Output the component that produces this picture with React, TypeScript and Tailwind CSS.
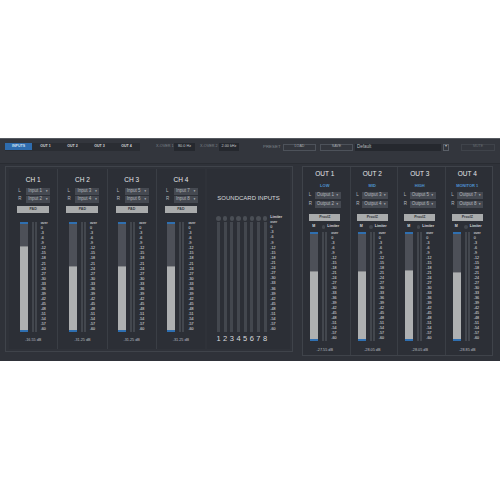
const scale = ['over', '0', '-3', '-6', '-9', '-12', '-15', '-18', '-21', '-24', '-27', '-30', '-33', '-36', '-39', '-42', '-45', '-48', '-51', '-54', '-57', '-60'];

const inputs = [
  { name: 'CH 1', l: 'Input 1', r: 'Input 2', level: 78, db: '-16.55 dB' },
  { name: 'CH 2', l: 'Input 3', r: 'Input 4', level: 60, db: '-31.25 dB' },
  { name: 'CH 3', l: 'Input 5', r: 'Input 6', level: 60, db: '-31.25 dB' },
  { name: 'CH 4', l: 'Input 7', r: 'Input 8', level: 60, db: '-31.25 dB' },
];

const outputs = [
  { name: 'OUT 1', tag: 'LOW', l: 'Output 1', r: 'Output 2', level: 64, db: '-27.55 dB' },
  { name: 'OUT 2', tag: 'MID', l: 'Output 3', r: 'Output 4', level: 64, db: '-28.05 dB' },
  { name: 'OUT 3', tag: 'HIGH', l: 'Output 5', r: 'Output 6', level: 65, db: '-28.05 dB' },
  { name: 'OUT 4', tag: 'MONITOR 1', l: 'Output 7', r: 'Output 8', level: 63, db: '-28.85 dB' },
];

const Scale = () => (
  <div className="flex h-full w-[8px] flex-col justify-between text-[3.6px] leading-none text-[#e8eaec]">
    {scale.map((s) => (
      <span key={s}>{s}</span>
    ))}
  </div>
);

const Meter = ({ level }: { level: number }) => (
  <div className="flex h-full gap-[4px]">
    <div className="relative h-full w-[8px] bg-[#4d5058]">
      <div className="absolute right-0 bottom-0 left-0 border-t border-[#85878a] bg-[#aeb0b1]" style={{ height: `${level}%` }} />
      <div className="absolute top-0 right-0 left-0 h-[2px] bg-[#2f6fb0]" />
      <div className="absolute right-0 bottom-0 left-0 h-[2px] bg-[#2f6fb0]" />
    </div>
    <div className="flex h-full w-[5px] gap-px">
      <div className="h-full flex-1 bg-[#43474e]" />
      <div className="h-full flex-1 bg-[#43474e]" />
    </div>
  </div>
);

const Select = ({ side, label, wide }: { side: string; label: string; wide?: boolean }) => (
  <div className={`flex h-[7px] items-center text-[4.5px] leading-none text-[#b4b8be] ${wide ? 'gap-[3px]' : 'gap-[5px]'}`}>
    <span className="w-[3px]">{side}</span>
    <div className={`flex h-[7px] items-center justify-between bg-[#454951] px-[2px] ${wide ? 'w-[26px]' : 'w-[24px]'}`}>
      <span>{label}</span>
      <span className="text-[3px]">▼</span>
    </div>
  </div>
);

const Tab = ({ label, active }: { label: string; active?: boolean }) => (
  <div className={`flex h-[7px] w-[27px] items-center justify-center text-[3.6px] leading-none font-bold ${active ? 'bg-[#2e6cae] text-[#cfe0f2]' : 'text-[#d5d8dc]'}`}>
    {label}
  </div>
);

const App = () => {
  return (
    <div className="h-[500px] w-[500px] overflow-hidden bg-white font-['Liberation_Sans',sans-serif]">
      <div className="mt-[138px] h-[223px] bg-[#2f3239]">
        {/* top bar */}
        <div className="flex h-[26px] items-start border-t border-b border-t-[#565a60] border-b-[#292c32] bg-[#33363d] pt-[4px] pl-[5px]">
          <div className="flex h-[8px] w-[135px] items-start bg-[#2a2d33]">
            <Tab label="INPUTS" active />
            <Tab label="OUT 1" />
            <Tab label="OUT 2" />
            <Tab label="OUT 3" />
            <Tab label="OUT 4" />
          </div>
          <div className="flex h-[8px] items-center text-[3.8px] whitespace-nowrap text-[#7d828a]">
            <span className="ml-[16px] w-[15px]">X-OVER 1</span>
            <span className="ml-[3px] w-[21px] bg-[#25282e] py-px text-center text-[#c3c7cc]">80.0 Hz</span>
            <span className="ml-[5px] w-[16px]">X-OVER 2</span>
            <span className="ml-[3px] w-[20px] bg-[#25282e] py-px text-center text-[#c3c7cc]">2.00 kHz</span>
            <span className="ml-[24px] w-[16px] text-[4.4px]">PRESET</span>
            <div className="ml-[4px] flex h-[7px] w-[33px] items-center justify-center border border-[#4d525a] text-[3.6px] text-[#a5a9ae]">LOAD</div>
            <div className="ml-[4px] flex h-[7px] w-[33px] items-center justify-center border border-[#4d525a] text-[3.6px] text-[#a5a9ae]">SAVE</div>
            <div className="ml-[2px] flex h-[7px] w-[86px] items-center bg-[#25282e] px-[2px] text-[4.5px] text-[#b5b9be]">Default</div>
            <div className="ml-[2px] flex h-[7px] w-[6px] items-center justify-center border border-[#5a5f67] text-[3.6px] text-[#b5b9be]">▾</div>
            <div className="ml-[12px] flex h-[7px] w-[34px] items-center justify-center border border-[#3f434a] text-[3.6px] text-[#666b72]">MUTE</div>
          </div>
        </div>

        <div className="mt-[2px] flex items-start pl-[5px]">
          {/* inputs panel */}
          <div className="flex h-[186px] w-[288px] gap-[2px] border border-[#3f434a] pt-[2px] pr-[2px] pb-[2px] pl-[3px]">
            <div className="flex h-full w-[196px] bg-[#2c2f36]">
              {inputs.map((ch) => (
                <div key={ch.name} className="flex h-full flex-1 flex-col items-center border-r border-[#3a3e45] last:border-r-0">
                  <div className="mt-[5.5px] h-[9px] text-[6.5px] leading-[9px] text-[#e6e8ea]">{ch.name}</div>
                  <div className="mt-[4px] ml-[2px] flex flex-col gap-[1.5px]">
                    <Select side="L" label={ch.l} />
                    <Select side="R" label={ch.r} />
                  </div>
                  <div className="mt-[3px] flex h-[7px] w-[32px] shrink-0 items-center justify-center bg-[#a9abac] text-[3.6px] font-bold text-[#33363b]">PAD</div>
                  <div className="mt-[9px] ml-[2px] flex h-[110px] w-[29px] shrink-0 gap-[4px]">
                    <Meter level={ch.level} />
                    <Scale />
                  </div>
                  <div className="mt-[7px] text-[3.8px] leading-none text-[#b8bcc1]">{ch.db}</div>
                </div>
              ))}
            </div>
            <div className="flex h-full w-[83px] flex-col items-center bg-[#2c2f36]">
              <div className="mt-[25px] h-[9px] text-[6px] leading-[9px] text-[#d8dadd]">SOUNDCARD INPUTS</div>
              <div className="mt-[13px] flex h-[125px] gap-[1.67px] self-start pl-[9px]">
                {[1, 2, 3, 4, 5, 6, 7, 8].map((n) => (
                  <div key={n} className="flex w-[5px] flex-col items-center">
                    <div className="size-[4.5px] shrink-0 rounded-full bg-[#4a4e55]" />
                    <div className="mt-px h-[110px] w-[3px] shrink-0 bg-[#43474e]" />
                    <div className="mt-[3px] text-[7.5px] leading-[8px] text-[#d8dadd]">{n}</div>
                  </div>
                ))}
                <div className="ml-[1px] flex h-[116px] flex-col">
                  <span className="mb-[1.5px] text-[3.6px] leading-none font-bold text-[#d5d8dc]">Limiter</span>
                  <div className="flex-1">
                    <Scale />
                  </div>
                </div>
              </div>
            </div>
          </div>

          {/* outputs panel */}
          <div className="ml-[9px] flex h-[190px] w-[191px] border border-[#3f434a] bg-[#2c2f36]">
            {outputs.map((ch) => (
              <div key={ch.name} className="flex h-full flex-1 flex-col items-center border-r border-[#3a3e45] pr-[3px] last:border-r-0">
                <div className="mt-[2px] h-[9px] text-[6.5px] leading-[9px] text-[#e6e8ea]">{ch.name}</div>
                <div className="mt-[4.5px] text-[4px] leading-[5px] font-bold text-[#4f93d2]">{ch.tag}</div>
                <div className="mt-[4.5px] flex flex-col gap-[1.5px]">
                  <Select side="L" label={ch.l} wide />
                  <Select side="R" label={ch.r} wide />
                </div>
                <div className="mt-[6.5px] flex h-[7px] w-[31px] shrink-0 items-center justify-center bg-[#a9abac] text-[3.6px] font-bold text-[#33363b]">ProcIZ</div>
                <div className="mt-[2.7px] flex h-[6px] w-[29px] shrink-0 items-center text-[3.6px] font-bold text-[#d5d8dc]">
                  <span className="w-[13px] pl-[2px]">M</span>
                  <span className="size-[4px] rounded-full bg-[#43474e]" />
                  <span className="ml-[2px]">Limiter</span>
                </div>
                <div className="mt-[2.3px] flex h-[108.7px] w-[29px] shrink-0 gap-[4px]">
                  <Meter level={ch.level} />
                  <Scale />
                </div>
                <div className="mt-[8px] text-[3.8px] leading-none text-[#b8bcc1]">{ch.db}</div>
              </div>
            ))}
          </div>
        </div>
      </div>
    </div>
  );
};

export default App;
